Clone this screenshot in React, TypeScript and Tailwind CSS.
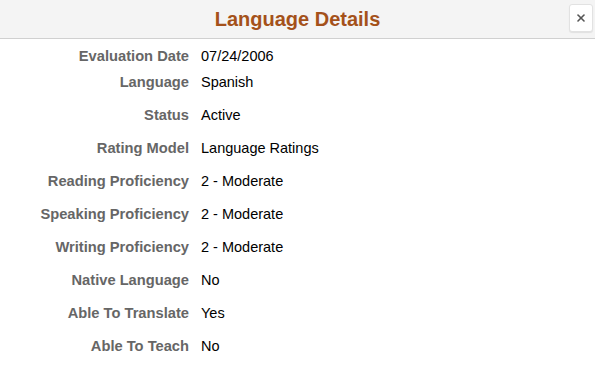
import { X } from "lucide-react";

const rows: [string, string][] = [
  ["Evaluation Date", "07/24/2006"],
  ["Language", "Spanish"],
  ["Status", "Active"],
  ["Rating Model", "Language Ratings"],
  ["Reading Proficiency", "2 - Moderate"],
  ["Speaking Proficiency", "2 - Moderate"],
  ["Writing Proficiency", "2 - Moderate"],
  ["Native Language", "No"],
  ["Able To Translate", "Yes"],
  ["Able To Teach", "No"],
];

export default function App() {
  return (
    <div className="h-[372px] w-[595px] overflow-hidden bg-white font-['Liberation_Sans',Arial,sans-serif]">
      <div className="relative flex h-[39px] items-center justify-center border-b border-[#d0d0d0] bg-[#f4f4f4]">
        <h1 className="text-[20px] font-bold leading-none text-[#a4511a]">
          Language Details
        </h1>
        <button className="absolute right-[2px] top-[4px] flex h-[28px] w-[24px] items-center justify-center rounded-[3px] border border-[#e2e2e2] bg-white text-[#555] shadow-[0_1px_1px_rgba(0,0,0,0.08)]">
          <X size={12} strokeWidth={3.2} />
        </button>
      </div>

      <div className="flex flex-col pt-[7px]">
        {rows.map(([label, value], i) => (
          <div
            key={label}
            className={`flex h-[20px] items-center leading-[20px] ${
              i === 0 ? "" : i === 1 ? "mt-[6px]" : "mt-[13px]"
            }`}
          >
            <span className="w-[189px] text-right text-[14.7px] font-bold text-[#666666]">
              {label}
            </span>
            <span className="pl-[12px] text-[14.5px] text-black">{value}</span>
          </div>
        ))}
      </div>
    </div>
  );
}
